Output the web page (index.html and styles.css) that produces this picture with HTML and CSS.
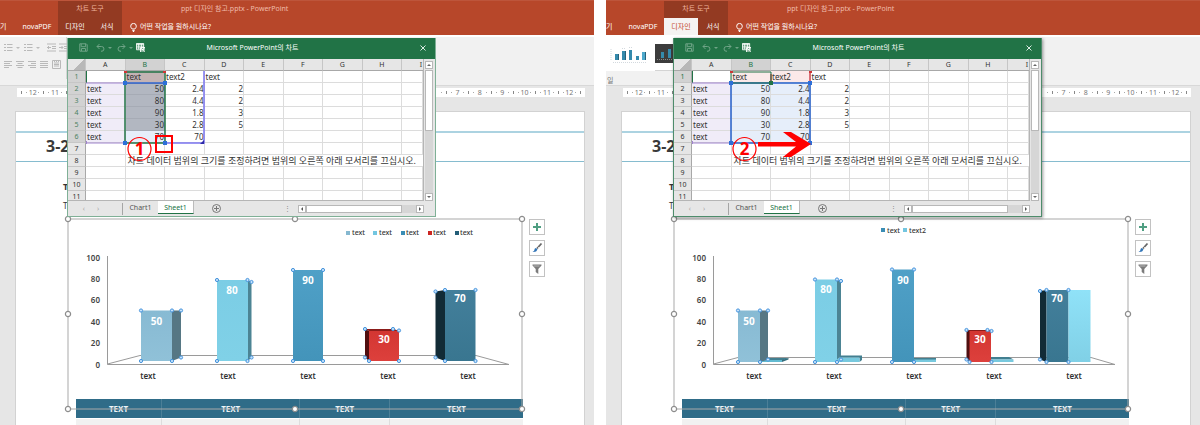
FILE: index.html
```html
<!DOCTYPE html>
<html lang="ko">
<head>
<meta charset="utf-8">
<title>ppt 디자인 참고.pptx - PowerPoint</title>
<link rel="stylesheet" href="styles.css">
</head>
<body>
<svg class="defs" aria-hidden="true">
  <defs>
    <symbol id="i-bullets" viewBox="0 0 9 9"><path d="M0 1.500h2M0 4.500h2M0 7.500h2M3 1.500h5.500M3 4.500h5.500M3 7.500h5.500"/></symbol>
    <symbol id="i-indent" viewBox="0 0 9 9"><path d="M0 1h9M5 3.500h4M5 5.500h4M0 8h9M4 4.500H0M2 3L.5 4.500 2 6"/></symbol>
    <symbol id="i-outdent" viewBox="0 0 9 9"><path d="M0 1h9M5 3.500h4M5 5.500h4M0 8h9M0 4.500h4M2.500 3L4 4.500 2.500 6"/></symbol>
    <symbol id="i-left" viewBox="0 0 9 9"><path d="M0 1.500h8M0 3.500h6M0 5.500h8M0 7.500h5"/></symbol>
    <symbol id="i-center" viewBox="0 0 9 9"><path d="M0 1.500h8M1.500 3.500h5M0 5.500h8M1.500 7.500h5"/></symbol>
    <symbol id="i-right" viewBox="0 0 9 9"><path d="M0 1.500h8M3 3.500h5M0 5.500h8M2 7.500h6"/></symbol>
    <symbol id="i-justify" viewBox="0 0 9 9"><path d="M0 1.500h8M0 3.500h8M0 5.500h8M0 7.500h8"/></symbol>
    <symbol id="i-columns" viewBox="0 0 9 9"><path d="M.5.5h8v8h-8zM2 3h5M2 4.500h5M2 6h5M2.500 0v2M4.500 0v2M6.500 0v2"/></symbol>
    <symbol id="i-save" viewBox="0 0 9 9"><path d="M.8.8h6.400l1 1v6.400H.8zM2.200 1v2.700h4.400V1M2.500 8V5.500h4V8"/></symbol>
    <symbol id="i-undo" viewBox="0 0 9 9"><path d="M3.500 1L1 3.500 3.500 6M1 3.500h4.500Q8 3.500 8 6T5 8.300"/></symbol>
    <symbol id="i-redo" viewBox="0 0 9 9"><path d="M5.500 1L8 3.500 5.500 6M8 3.500H3.500Q1 3.500 1 6t3 2.300"/></symbol>
    <symbol id="i-grid" viewBox="0 0 10 10"><path d="M.5.500h8v7h-8zM.5 1.500h8M.5 3.500h8M.5 5.500h8M3 1v6M6 1v6"/><path class="fill" d="M5 5h5v5H5z"/><path class="dark" d="M6.200 6.200l2.600 2.600M8.800 6.200L6.200 8.800"/></symbol>
    <symbol id="i-bulb" viewBox="0 0 7 9"><path d="M2.200 6Q.7 4.500.7 3.200a2.700 2.700 0 0 1 5.600 0Q6.300 4.500 4.800 6zM2.300 7.400h2.400M2.800 8.500h1.400"/></symbol>
    <symbol id="i-plus" viewBox="0 0 14 14"><path d="M7 3v8M3 7h8" stroke="#4f9f82" stroke-width="2"/></symbol>
    <symbol id="i-brush" viewBox="0 0 14 14"><path d="M11.500 2.500L7 7.500" stroke="#666" stroke-width="1.800"/><path d="M7.800 5.800l1.400 1.400" stroke="#fff" stroke-width=".7"/><path d="M6 7l1.500 1.500Q6.500 11.500 2.500 11q2-1 2-2.500T6 7z" fill="#2f73b7" stroke="none"/></symbol>
    <symbol id="i-funnel" viewBox="0 0 14 14"><path d="M2.500 2.500h9v1L8.300 7v5L5.700 10V7L2.500 3.500z" fill="#7b7b7b" stroke="none"/><path d="M3.500 4h6" stroke="#ddd" stroke-width=".6"/></symbol>
    <linearGradient id="g-pale" x1="0" y1="0" x2="0" y2="1"><stop offset="0" stop-color="#87bad3"/><stop offset="1" stop-color="#90c1d8"/></linearGradient>
    <linearGradient id="g-sky" x1="0" y1="0" x2="0" y2="1"><stop offset="0" stop-color="#7bcde5"/><stop offset="1" stop-color="#80d1e7"/></linearGradient>
    <linearGradient id="g-blue" x1="0" y1="0" x2="0" y2="1"><stop offset="0" stop-color="#4fa0c7"/><stop offset="1" stop-color="#4394ba"/></linearGradient>
    <linearGradient id="g-red" x1="0" y1="0" x2="0" y2="1"><stop offset="0" stop-color="#d33632"/><stop offset="1" stop-color="#dd403c"/></linearGradient>
    <linearGradient id="g-deep" x1="0" y1="0" x2="0" y2="1"><stop offset="0" stop-color="#437f9b"/><stop offset="1" stop-color="#397690"/></linearGradient>
    <linearGradient id="g-ice" x1="0" y1="0" x2="0" y2="1"><stop offset="0" stop-color="#90e2f8"/><stop offset="1" stop-color="#80d0e6"/></linearGradient>
    <g id="dot"><circle r="1.600" fill="#c5e2fa" stroke="#4694dd"/></g>
    <g id="grip"><circle r="2.600" fill="#fff" stroke="#8c8c8c" stroke-width="1.200"/></g>
    <g id="frame">
      <path d="M68 219H522V409H68Z" fill="none" stroke="#a9a9a9"/>
      <use href="#grip" x="68" y="219"/><use href="#grip" x="295" y="219"/><use href="#grip" x="522" y="219"/>
      <use href="#grip" x="68" y="314"/><use href="#grip" x="522" y="314"/>
      <use href="#grip" x="68" y="409"/><use href="#grip" x="295" y="409"/><use href="#grip" x="522" y="409"/>
    </g>
  </defs>
</svg>

<main class="shots">
  <section class="app">
    <header class="ribbon-head">
      <nav class="tabs"><a href="#">기</a><a href="#">novaPDF</a></nav>
      <div class="context">
        <span class="context-name">차트 도구</span>
        <nav class="context-tabs"><a href="#">디자인</a><a href="#">서식</a></nav>
      </div>
      <div class="head-rest">
        <span class="doc-title">ppt 디자인 참고.pptx - PowerPoint</span>
        <button class="tell-me"><svg class="bulb"><use href="#i-bulb"/></svg>어떤 작업을 원하시나요?</button>
      </div>
    </header>
    <div class="ribbon">
      <div class="paragraph">
        <div class="tool-row">
          <button class="tool drop" aria-label="글머리 기호"><svg><use href="#i-bullets"/></svg></button>
          <button class="tool drop" aria-label="번호 매기기"><svg><use href="#i-bullets"/></svg></button>
          <i class="bar"></i>
          <button class="tool" aria-label="내어쓰기"><svg><use href="#i-indent"/></svg></button>
          <button class="tool" aria-label="들여쓰기"><svg><use href="#i-outdent"/></svg></button>
        </div>
        <div class="tool-row">
          <button class="tool" aria-label="왼쪽 맞춤"><svg><use href="#i-left"/></svg></button>
          <button class="tool" aria-label="가운데 맞춤"><svg><use href="#i-center"/></svg></button>
          <button class="tool" aria-label="오른쪽 맞춤"><svg><use href="#i-right"/></svg></button>
          <button class="tool" aria-label="양쪽 맞춤"><svg><use href="#i-justify"/></svg></button>
          <button class="tool" aria-label="균등 분할"><svg><use href="#i-columns"/></svg></button>
        </div>
      </div>
    </div>
    <div class="workspace">
      <ul class="ruler"><li>12<li>11<li><li><li><li><li><li><li><li><li><li><li><li><li><li><li><li><li><li>7<li>8<li>9<li>10<li>11<li>12</ul>
      <article class="slide">
        <h1 class="slide-title">3-2</h1>
        <p class="lead">T</p>
        <p class="sub">T</p>
        <div class="chart-row">
          <figure class="chart">
            <svg viewBox="68 219 454 190" role="img" aria-label="차트">
              <g class="axis"><path d="M107.500 256V364.500H509L476 355.500H140L107.500 364"/></g>
              <g class="values"><text x="100" y="261">100</text><text x="100" y="282">80</text><text x="100" y="303">60</text><text x="100" y="325">40</text><text x="100" y="346">20</text><text x="100" y="368">0</text></g>
              <g class="cats"><text x="148" y="379">text</text><text x="228" y="379">text</text><text x="308" y="379">text</text><text x="388" y="379">text</text><text x="468" y="379">text</text></g>
              <g class="legend">
                <path fill="#86b8d0" d="M346 231h4v4h-4z"/><text x="352" y="235">text</text>
                <path fill="#73c6e0" d="M373 231h4v4h-4z"/><text x="379" y="235">text</text>
                <path fill="#3a8db5" d="M401 231h4v4h-4z"/><text x="406" y="235">text</text>
                <path fill="#cc2522" d="M428 231h4v4h-4z"/><text x="433" y="235">text</text>
                <path fill="#235d78" d="M455 231h4v4h-4z"/><text x="460" y="235">text</text>
              </g>
              <path fill="url(#g-pale)" d="M141 310.500h31V361h-31z"/><path fill="#567784" d="M172 310.500h9v47l-9 3.500z"/>
              <path fill="url(#g-sky)" d="M217 280h31v81h-31z"/><path fill="#4c8494" d="M248 280l3.500 2v75.500L248 361z"/>
              <path fill="url(#g-blue)" d="M293 270h30v91h-30z"/>
              <path fill="#8b1c1a" d="M365 329h29l5 2h-30z"/><path fill="#500f10" d="M365 329l4 2v30l-4-3.500z"/><path fill="url(#g-red)" d="M369 331h30v30h-30z"/>
              <path fill="#122b36" d="M435.500 291.500l9.500-1.500v71l-9.500-3.500z"/><path fill="url(#g-deep)" d="M445 290h30.500v71H445z"/>
              <g class="marks"><text x="156.500" y="325">50</text><text x="232" y="294">80</text><text x="308" y="284">90</text><text x="384" y="343">30</text><text x="460" y="302">70</text></g>
              <g>
                <use href="#dot" x="141" y="310.500"/><use href="#dot" x="172" y="310.500"/><use href="#dot" x="181" y="310.500"/><use href="#dot" x="141" y="361"/><use href="#dot" x="172" y="361"/><use href="#dot" x="181" y="357.500"/>
                <use href="#dot" x="217" y="280"/><use href="#dot" x="247.500" y="280"/><use href="#dot" x="251.500" y="282"/><use href="#dot" x="217" y="361"/><use href="#dot" x="247.500" y="361"/><use href="#dot" x="251.500" y="357.500"/>
                <use href="#dot" x="293" y="270"/><use href="#dot" x="323" y="270"/><use href="#dot" x="293" y="361"/><use href="#dot" x="323" y="361"/>
                <use href="#dot" x="365" y="329"/><use href="#dot" x="393" y="329"/><use href="#dot" x="399" y="330.500"/><use href="#dot" x="365" y="357.500"/><use href="#dot" x="369" y="361"/><use href="#dot" x="399" y="361"/>
                <use href="#dot" x="435.500" y="291.500"/><use href="#dot" x="445" y="290"/><use href="#dot" x="475.500" y="290"/><use href="#dot" x="435.500" y="357.500"/><use href="#dot" x="445" y="361"/><use href="#dot" x="475.500" y="361"/>
              </g>
              <use href="#frame"/>
            </svg>
          </figure>
          <div class="chart-tools">
            <button aria-label="차트 요소"><svg><use href="#i-plus"/></svg></button>
            <button aria-label="차트 스타일"><svg><use href="#i-brush"/></svg></button>
            <button aria-label="차트 필터"><svg><use href="#i-funnel"/></svg></button>
          </div>
        </div>
        <table class="slide-table">
          <colgroup><col class="c1"><col class="c2"><col class="c3"><col class="c4"></colgroup>
          <thead><tr><th>TEXT</th><th>TEXT</th><th>TEXT</th><th>TEXT</th></tr></thead>
          <tbody><tr><td></td><td></td><td></td><td></td></tr></tbody>
        </table>
      </article>
    </div>

    <div class="window">
      <div class="window-bar">
        <div class="quick">
          <button class="faint" aria-label="저장"><svg><use href="#i-save"/></svg></button>
          <button class="faint drop" aria-label="실행 취소"><svg><use href="#i-undo"/></svg></button>
          <button class="faint drop" aria-label="다시 실행"><svg><use href="#i-redo"/></svg></button>
          <button aria-label="데이터 편집"><svg><use href="#i-grid"/></svg></button>
        </div>
        <span>Microsoft PowerPoint의 차트</span>
        <button class="close" aria-label="닫기"><svg viewBox="0 0 6 6"><path d="M.5.5l5 5M5.500.5l-5 5"/></svg></button>
      </div>
      <div class="window-main">
        <div class="sheet">
          <table class="cells rows-on">
            <colgroup><col class="num"><col span="8"><col class="last"></colgroup>
            <thead><tr><th class="corner"></th><th>A</th><th class="on">B</th><th>C</th><th>D</th><th>E</th><th>F</th><th>G</th><th>H</th><th class="end">I</th></tr></thead>
            <tbody>
              <tr><th>1<td><td class="rose-on">text<td>text2<td>text<td><td><td><td><td>
              <tr><th>2<td class="lilac">text<td class="n on">50<td class="n">2.4<td class="n">2<td><td><td><td><td>
              <tr><th>3<td class="lilac">text<td class="n on">80<td class="n">4.4<td class="n">2<td><td><td><td><td>
              <tr><th>4<td class="lilac">text<td class="n on">90<td class="n">1.8<td class="n">3<td><td><td><td><td>
              <tr><th>5<td class="lilac">text<td class="n on">30<td class="n">2.8<td class="n">5<td><td><td><td><td>
              <tr><th>6<td class="lilac">text<td class="n azure">70<td class="n">70<td><td><td><td><td><td>
              <tr class="off"><th>7<td><td><td><td><td><td><td><td><td>
              <tr class="off"><th>8<td><td class="note" colspan="8">차트 데이터 범위의 크기를 조정하려면 범위의 오른쪽 아래 모서리를 끄십시오.
              <tr class="off"><th>9<td><td><td><td><td><td><td><td><td>
              <tr class="off"><th>10<td><td><td><td><td><td><td><td><td>
              <tr class="off"><th>11<td><td><td><td><td><td><td><td><td>
            </tbody>
          </table>
        </div>
        <div class="vscroll"><button class="up" aria-label="위로"></button><i class="thumb"></i><i class="track"></i><button class="down" aria-label="아래로"></button></div>
      </div>
      <div class="sheet-tabs">
        <div class="arrows"><button aria-label="이전">‹</button><button aria-label="다음">›</button></div>
        <button class="sheet-tab">Chart1</button><button class="sheet-tab active">Sheet1</button>
        <button class="add" aria-label="새 시트"><svg viewBox="0 0 9 9"><circle cx="4.500" cy="4.500" r="4"/><path d="M4.500 2v5M2 4.500h5"/></svg></button>
        <span class="dots">⋮</span>
        <div class="hscroll"><button class="prev" aria-label="왼쪽"></button><i class="thumb"></i><i class="track"></i><button class="next" aria-label="오른쪽"></button></div>
      </div>
      <svg class="marks-layer" viewBox="0 0 369 179">
        <g fill="none">
          <path stroke="#217346" d="M19.500 33V45"/>
          <path stroke="#a083cf" d="M19 45H58M19 105H58M19.500 103v3"/>
          <path stroke="#7b74ef" stroke-width="1.500" d="M137 33V105H98"/>
          <path stroke="#217346" stroke-width="1.500" d="M58 34H98V105H58Z"/>
          <path stroke="#2458c5" stroke-width="1.500" d="M58 45H98"/>
        </g>
        <path fill="#2d6fd8" d="M56 43h4v4h-4zM96 43h4v4h-4zM56 103h4v4h-4zM96 103h4v4h-4z"/>
        <path fill="#cf3535" d="M57 33h3v2h-3zM96 33h3v2h-3z"/>
        <path fill="#2d2aa8" d="M137 102v4h-4z"/>
        <g class="callout"><circle cx="72.500" cy="111" r="11.500"/><text x="72.500" y="117">1</text><path stroke-width="2" d="M89 98h16v16H89z"/></g>
      </svg>
    </div>
  </section>

  <section class="app">
    <header class="ribbon-head">
      <nav class="tabs"><a href="#">기</a><a href="#">novaPDF</a></nav>
      <div class="context">
        <span class="context-name">차트 도구</span>
        <nav class="context-tabs"><a class="current" href="#">디자인</a><a href="#">서식</a></nav>
      </div>
      <div class="head-rest">
        <span class="doc-title">ppt 디자인 참고.pptx - PowerPoint</span>
        <button class="tell-me"><svg class="bulb"><use href="#i-bulb"/></svg>어떤 작업을 원하시나요?</button>
      </div>
    </header>
    <div class="ribbon">
      <div class="styles">
        <div class="gallery">
          <svg class="thumb-light" viewBox="0 0 49 35"><path fill="#fff" d="M0 0h49v35H0z"/><g fill="#348aac"><path d="M9 18h3v6H9zM16 15h3v9h-3zM23 14h3v10h-3zM30 20h3v4h-3z"/></g><path fill="#4da9cc" d="M36 16h3v8h-3z"/><path fill="#27617a" d="M12 18h1v6h-1zM19 15h1v9h-1zM39 16h1v8h-1z"/><g stroke="#d3d9de" stroke-dasharray="1 1"><path d="M5 13v11M7 26.500h34M16 12.500h3M23 11.500h3"/></g></svg>
          <svg class="thumb-dark" viewBox="0 0 19 19"><path fill="#3c3c3c" d="M0 0h19v19H0z"/><path fill="#348aac" d="M6 8h3v6H6zM13 5h3v9h-3z"/><path stroke="#888" stroke-dasharray="1 1" d="M2 15.500h16"/></svg>
        </div>
        <span class="group-name">일</span>
      </div>
    </div>
    <div class="workspace">
      <ul class="ruler"><li>12<li>11<li><li><li><li><li><li><li><li><li><li><li><li><li><li><li><li><li><li>7<li>8<li>9<li>10<li>11<li>12</ul>
      <article class="slide">
        <h1 class="slide-title">3-2</h1>
        <p class="lead">T</p>
        <p class="sub">T</p>
        <div class="chart-row">
          <figure class="chart">
            <svg viewBox="68 219 454 190" role="img" aria-label="차트">
              <g class="axis"><path d="M107.500 256V364.500H509L485 357.500H132L107.500 364"/></g>
              <g class="values"><text x="100" y="261">100</text><text x="100" y="282">80</text><text x="100" y="303">60</text><text x="100" y="325">40</text><text x="100" y="346">20</text><text x="100" y="368">0</text></g>
              <g class="cats"><text x="148" y="379">text</text><text x="228" y="379">text</text><text x="308" y="379">text</text><text x="388" y="379">text</text><text x="468" y="379">text</text></g>
              <g class="legend">
                <path fill="#3a8db5" d="M275 228h4v4h-4z"/><text x="281" y="233">text</text>
                <path fill="#73c6e0" d="M297 228h4v4h-4z"/><text x="303" y="233">text2</text>
              </g>
              <path fill="#427f90" d="M161 358h21.500l-6 2.500H154z"/><path fill="#63bbd1" d="M154 360h22v2h-22z"/><path fill="#376e7d" d="M176 360l6.500-2v1.500L176 362z"/>
              <path fill="url(#g-pale)" d="M132 310.500h22V362h-22z"/><path fill="#567784" d="M154 310.500h8v49l-8 2.500z"/>
              <path fill="#427f90" d="M235 355.500h21L253.500 357.500H231zM253.500 357.500l2.500-2v4.500l-2.500 2z"/><path fill="#78c9de" d="M231 357.500h22.500v4.500H231z"/>
              <path fill="url(#g-sky)" d="M209 279.500h22V362h-22z"/><path fill="#4c8494" d="M231 279.500l4 2V355.500l-4 4z"/>
              <path fill="#427f90" d="M308 358h22v2h-22z"/><path fill="#78c9de" d="M308 359.500h22v2.500h-22z"/>
              <path fill="url(#g-blue)" d="M286 269.500h22V362h-22z"/>
              <path fill="#427f90" d="M385 357h18l4.500 2.500H385z"/><path fill="#78c9de" d="M385 359.500h22.500v2.500H385z"/>
              <path fill="#500f10" d="M360.500 330l3.500.5V362l-3.500-2.500z"/><path fill="url(#g-red)" d="M363.500 330.500H385V362h-21.500z"/><path stroke="#8b1c1a" d="M361 330.500h24"/>
              <path fill="#122b36" d="M434 291l6.500-1V362l-6.500-2.500z"/><path fill="url(#g-deep)" d="M440.500 290h22v72h-22z"/><path fill="url(#g-ice)" d="M462.500 290h22v72h-22z"/>
              <g class="marks"><text x="143" y="325">50</text><text x="220" y="293">80</text><text x="297" y="284">90</text><text x="374" y="343">30</text><text x="451" y="302">70</text></g>
              <g>
                <use href="#dot" x="132" y="310.500"/><use href="#dot" x="154" y="310.500"/><use href="#dot" x="162" y="310.500"/><use href="#dot" x="132" y="362"/><use href="#dot" x="154" y="362"/><use href="#dot" x="162" y="359.500"/>
                <use href="#dot" x="209" y="279.500"/><use href="#dot" x="231" y="279.500"/><use href="#dot" x="235" y="281"/><use href="#dot" x="209" y="362"/><use href="#dot" x="231" y="362"/><use href="#dot" x="235" y="359.500"/>
                <use href="#dot" x="286" y="269.500"/><use href="#dot" x="308" y="269.500"/><use href="#dot" x="286" y="362"/><use href="#dot" x="308" y="362"/>
                <use href="#dot" x="360.500" y="330"/><use href="#dot" x="381.500" y="330"/><use href="#dot" x="385.500" y="331"/><use href="#dot" x="360.500" y="359.500"/><use href="#dot" x="363.500" y="362"/><use href="#dot" x="385.500" y="362"/>
                <use href="#dot" x="434" y="291"/><use href="#dot" x="440.500" y="290"/><use href="#dot" x="462.500" y="290"/><use href="#dot" x="434" y="359.500"/><use href="#dot" x="440.500" y="362"/><use href="#dot" x="462.500" y="362"/>
              </g>
              <use href="#frame"/>
            </svg>
          </figure>
          <div class="chart-tools">
            <button aria-label="차트 요소"><svg><use href="#i-plus"/></svg></button>
            <button aria-label="차트 스타일"><svg><use href="#i-brush"/></svg></button>
            <button aria-label="차트 필터"><svg><use href="#i-funnel"/></svg></button>
          </div>
        </div>
        <table class="slide-table">
          <colgroup><col class="c1"><col class="c2"><col class="c3"><col class="c4"></colgroup>
          <thead><tr><th>TEXT</th><th>TEXT</th><th>TEXT</th><th>TEXT</th></tr></thead>
          <tbody><tr><td></td><td></td><td></td><td></td></tr></tbody>
        </table>
      </article>
    </div>

    <div class="window raised">
      <div class="window-bar">
        <div class="quick">
          <button class="faint" aria-label="저장"><svg><use href="#i-save"/></svg></button>
          <button class="faint drop" aria-label="실행 취소"><svg><use href="#i-undo"/></svg></button>
          <button class="faint drop" aria-label="다시 실행"><svg><use href="#i-redo"/></svg></button>
          <button aria-label="데이터 편집"><svg><use href="#i-grid"/></svg></button>
        </div>
        <span>Microsoft PowerPoint의 차트</span>
        <button class="close" aria-label="닫기"><svg viewBox="0 0 6 6"><path d="M.5.5l5 5M5.500.5l-5 5"/></svg></button>
      </div>
      <div class="window-main">
        <div class="sheet">
          <table class="cells">
            <colgroup><col class="num"><col span="8"><col class="last"></colgroup>
            <thead><tr><th class="corner"></th><th>A</th><th class="on">B</th><th>C</th><th>D</th><th>E</th><th>F</th><th>G</th><th>H</th><th class="end">I</th></tr></thead>
            <tbody>
              <tr><th class="on">1<td><td class="rose">text<td class="rose">text2<td>text<td><td><td><td><td>
              <tr><th>2<td class="lilac">text<td class="n azure">50<td class="n azure">2.4<td class="n">2<td><td><td><td><td>
              <tr><th>3<td class="lilac">text<td class="n azure">80<td class="n azure">4.4<td class="n">2<td><td><td><td><td>
              <tr><th>4<td class="lilac">text<td class="n azure">90<td class="n azure">1.8<td class="n">3<td><td><td><td><td>
              <tr><th>5<td class="lilac">text<td class="n azure">30<td class="n azure">2.8<td class="n">5<td><td><td><td><td>
              <tr><th>6<td class="lilac">text<td class="n azure">70<td class="n azure">70<td><td><td><td><td><td>
              <tr><th>7<td><td><td><td><td><td><td><td><td>
              <tr><th>8<td><td class="note" colspan="8">차트 데이터 범위의 크기를 조정하려면 범위의 오른쪽 아래 모서리를 끄십시오.
              <tr><th>9<td><td><td><td><td><td><td><td><td>
              <tr><th>10<td><td><td><td><td><td><td><td><td>
              <tr><th>11<td><td><td><td><td><td><td><td><td>
            </tbody>
          </table>
        </div>
        <div class="vscroll"><button class="up" aria-label="위로"></button><i class="thumb"></i><i class="track"></i><button class="down" aria-label="아래로"></button></div>
      </div>
      <div class="sheet-tabs">
        <div class="arrows"><button aria-label="이전">‹</button><button aria-label="다음">›</button></div>
        <button class="sheet-tab">Chart1</button><button class="sheet-tab active">Sheet1</button>
        <button class="add" aria-label="새 시트"><svg viewBox="0 0 9 9"><circle cx="4.500" cy="4.500" r="4"/><path d="M4.500 2v5M2 4.500h5"/></svg></button>
        <span class="dots">⋮</span>
        <div class="hscroll"><button class="prev" aria-label="왼쪽"></button><i class="thumb"></i><i class="track"></i><button class="next" aria-label="오른쪽"></button></div>
      </div>
      <svg class="marks-layer" viewBox="0 0 369 179">
        <g fill="none">
          <path stroke="#217346" d="M19.500 33V45"/>
          <path stroke="#a083cf" d="M19 45H58M19 105H58M19.500 103v3"/>
          <path stroke="#cf4550" stroke-width="1.500" d="M98 36V45M137 34V45"/>
          <path stroke="#2460cc" stroke-width="1.500" d="M58 45H137V105H58Z"/>
          <path stroke="#217346" d="M58 34H98V45H58Z"/>
        </g>
        <path fill="#2d6fd8" d="M56 43h4v4h-4zM135 43h4v4h-4zM56 103h4v4h-4zM135 103h4v4h-4z"/>
        <path fill="#cf3535" d="M57 33h3v2h-3zM136 33h3v2h-3z"/>
        <path fill="#217346" d="M96 43h4v4h-4z"/>
        <g class="callout"><circle cx="71.500" cy="111" r="11.500"/><text x="71.500" y="117">2</text></g>
        <path fill="#f00" d="M85 104h38L110 94h8l20 12-20 13h-8l13-10.500H85z"/>
      </svg>
    </div>
  </section>
</main>
</body>
</html>
```
FILE: styles.css
```css
* { box-sizing: border-box; }

body {
  margin: 0;
  background: #fff;
  color: #333;
  font: 7px/10px "Noto Sans", "Noto Sans CJK KR", sans-serif;
}

h1, p, ul, figure { margin: 0; padding: 0; }
a { color: inherit; text-decoration: none; }

button {
  margin: 0;
  padding: 0;
  border: 0;
  background: none;
  color: inherit;
  font: inherit;
}

.defs { position: absolute; width: 0; height: 0; }

.shots { display: flex; gap: 12px; min-height: 100vh; }

.app {
  position: relative;
  flex: 1;
  min-width: 0;
  display: flex;
  flex-direction: column;
  overflow: hidden;
}

/* Title and tab strip */
.ribbon-head {
  display: flex;
  height: 35px;
  border-top: 1px solid #bd553b;
  background: #b7472a;
  color: #f8e0d8;
}

.tabs { display: flex; align-items: flex-end; gap: 16px; width: 58px; padding-bottom: 3px; }
.tabs a { color: #fff; }

.context { width: 64px; display: flex; flex-direction: column; background: #933a22; }
.context-name { flex: 1; padding-top: 3px; text-align: center; color: #eeb49f; }
.context-tabs { display: flex; color: #fff; }
.context-tabs a { flex: 1 1 34px; padding: 3px 0; line-height: 11px; text-align: center; }
.context-tabs a + a { flex-basis: 30px; }
.context-tabs .current { background: #f5f3f2; color: #c4492b; }

.head-rest { flex: 1; display: flex; flex-direction: column; justify-content: space-between; padding: 3px 0 3px 8px; }
.doc-title { padding-left: 51px; color: #f0bcab; }
.tell-me { display: flex; align-items: center; gap: 3px; height: 10px; color: #fff; }
.bulb { width: 7px; height: 9px; fill: none; stroke: #fff; stroke-width: 1; }

/* Ribbon */
.ribbon { height: 51px; border-top: 2px solid #fff; border-bottom: 1px solid #d8d8d8; background: #f1f1f1; }

.paragraph {
  display: flex;
  flex-direction: column;
  gap: 8px;
  width: 67px;
  height: 42px;
  padding: 6px 0 0 4px;
  border-right: 1px solid #d5d5d5;
}
.tool-row { display: flex; align-items: center; gap: 3px; height: 9px; }
.tool { display: flex; align-items: center; height: 9px; }
.tool svg { width: 9px; height: 9px; fill: none; stroke: #b9b9b9; stroke-width: 1; }
.drop::after { content: ""; margin: 0 1px 0 3px; border: 2px solid transparent; border-top-color: #bbb; border-bottom: 0; }
.bar { width: 1px; height: 12px; background: #d2d2d2; }

.styles { width: 68px; height: 48px; }
.gallery { display: flex; align-items: center; height: 34px; border-bottom: 1px solid #d4d4d4; background: #fff; }
.thumb-light { width: 49px; height: 35px; }
.thumb-dark { width: 19px; height: 19px; }
.group-name { display: block; padding: 5px 0 0 1px; color: #777; }

/* Work area */
.workspace { flex: 1; display: flex; flex-direction: column; padding: 2px 9px 0 15px; background: #e6e6e6; }

.ruler {
  display: flex;
  height: 9px;
  margin-left: 2px;
  padding: 0 4px;
  background: #fff;
  color: #777;
  line-height: 9px;
  list-style: none;
}
.ruler li { flex: 1 1 0; display: flex; justify-content: space-between; align-items: center; min-width: 0; }
.ruler li::before {
  content: "";
  width: 7px;
  height: 3px;
  background: linear-gradient(#888, #888) 0 0 / 1px 3px no-repeat, linear-gradient(#aaa, #aaa) 5px 1px / 1px 1px no-repeat;
}
.ruler li::after { content: ""; width: 6px; height: 1px; background: linear-gradient(#aaa, #aaa) 1px 0 / 1px 1px no-repeat; }
.ruler::after { content: ""; align-self: center; width: 1px; height: 3px; background: #888; }

.slide { flex: 1; margin-top: 14px; border: 1px solid #d2d2d2; border-bottom: 0; background: #fff; }
.slide-title {
  height: 31px;
  margin-top: 19px;
  padding: 1px 0 0 30px;
  border-top: 2px solid #acd3e1;
  border-bottom: 1px solid #86bccf;
  color: #3a3a3a;
  font-size: 16px;
  line-height: 24px;
}
.lead { margin-top: 16px; padding-left: 47px; font-size: 9px; font-weight: 700; line-height: 18px; }
.sub { margin-bottom: 3px; padding-left: 47px; font-size: 8px; line-height: 20px; }

.chart-row { display: flex; gap: 7px; padding: 0 39px 0 52px; }
.chart { position: relative; z-index: 1; flex: 1; }
.chart svg { display: block; width: 100%; overflow: visible; }
.axis { fill: none; stroke: #9a9a9a; stroke-width: 1; }
.values { fill: #444; font-size: 8px; font-weight: 600; text-anchor: end; }
.cats { fill: #333; font-size: 8px; font-weight: 600; text-anchor: middle; }
.legend { fill: #333; font-size: 7px; font-weight: 500; }
.marks { fill: #fff; font-size: 10px; font-weight: 700; text-anchor: middle; }

.chart-tools { display: flex; flex-direction: column; gap: 5px; }
.chart-tools button { width: 16px; height: 16px; border: 1px solid #c2c2c2; background: #fff; }
.chart-tools svg { display: block; width: 14px; height: 14px; fill: none; }

.slide-table { width: calc(100% - 121px); margin: -10px 61px 0 60px; border-spacing: 0; table-layout: fixed; }
.slide-table .c1 { width: 19%; }
.slide-table .c2 { width: 31%; }
.slide-table .c3 { width: 20%; }
.slide-table .c4 { width: 30%; }
.slide-table th { height: 19px; padding: 0; background: #2f6c88; color: #eef4f7; font-size: 8px; line-height: 10px; }
.slide-table th + th { border-left: 1px solid #4b7f97; }
.slide-table td { height: 7px; padding: 0; border-top: 1px solid #fff; background: #f1f1f1; }
.slide-table td + td { border-left: 1px solid #ddd; }

/* Data window over the slide */
.window {
  position: absolute;
  z-index: 2;
  top: 38px;
  left: 67px;
  width: 369px;
  border: 1px solid #7fb096;
  border-top: 0;
  background: #e6e6e6;
}
.raised { border-color: #4d8c6b; box-shadow: 1px 1px 3px #0006; }

.window-bar {
  display: grid;
  grid-template-columns: 1fr auto 1fr;
  align-items: center;
  height: 21px;
  padding: 0 9px 2px 11px;
  background: #217346;
  color: #fff;
}
.quick { display: flex; gap: 6px; }
.quick button { display: flex; align-items: center; }
.quick svg { width: 9px; height: 9px; fill: none; stroke: #fff; stroke-width: 1; }
.quick .faint { opacity: .35; }
.quick .fill { fill: #fff; stroke: none; }
.quick .dark { stroke: #217346; }
.quick .faint + .faint { margin-left: 2px; }
.quick .drop { margin-right: -4px; }
.quick .drop::after { border-top-color: #fff; }
.close { justify-self: end; display: flex; }
.close svg { width: 6px; height: 6px; stroke: #dcebe3; stroke-width: 1; }

.window-main { display: flex; height: 142px; }
.sheet { flex: 1; overflow: hidden; border-right: 1px solid #b5b5b5; border-bottom: 1px solid #b5b5b5; }
.cells { width: 100%; border-spacing: 0; table-layout: fixed; font-size: 8px; line-height: 11px; }
.num { width: 18px; }
.last { width: 21px; }
.cells th { height: 12px; padding: 0; background: #e6e6e6; color: #333; font-size: 7px; font-weight: 400; border-right: 1px solid #c6c6c6; border-bottom: 1px solid #c6c6c6; }
.cells thead th { border-bottom-color: #a8a8a8; }
.cells tbody th { border-right-color: #a8a8a8; }
.cells .end { padding-right: 1px; border-right: 0; text-align: right; }
.cells .on { background: #d2d2d2; color: #217346; }
.rows-on tbody tr:not(.off) th { background: #d2d2d2; color: #4d8264; }
.cells .corner { background: linear-gradient(135deg, #e6e6e6 60%, #b8b8b8 60%); }
.cells td { height: 12px; padding: 0 1px; background: #fff; color: #333; border-right: 1px solid #dcdcdc; border-bottom: 1px solid #dcdcdc; white-space: nowrap; }
.cells td.n { padding-right: 0; text-align: right; }
.cells td.on { background: #b2b7c1; color: #333; border-color: #a6abb5; }
.cells td.lilac { background: #f0ecf8; }
.cells td.azure { background: #e6eefa; }
.cells td.rose { background: #fbe9e9; }
.cells td.rose-on { background: #c4b3b4; }
.cells td.note { padding-left: 2px; border-right: 0; font-size: 9px; }

.vscroll { display: flex; flex-direction: column; width: 11px; padding: 2px 2px 0 1px; }
.vscroll button, .hscroll button { display: flex; align-items: center; justify-content: center; width: 8px; height: 8px; border: 1px solid #b8b8b8; background: #fff; }
.vscroll button::before, .hscroll button::before { content: ""; border: 2px solid transparent; }
.vscroll .up::before { border-bottom-color: #666; border-top: 0; }
.vscroll .down::before { border-top-color: #666; border-bottom: 0; }
.vscroll .thumb { height: 61px; margin-top: 1px; border: 1px solid #b8b8b8; background: #fff; }
.vscroll .track { flex: 1; background: #d6d6d6; }

.sheet-tabs { display: flex; align-items: center; height: 15px; padding-right: 11px; color: #555; }
.arrows { display: flex; justify-content: center; gap: 12px; width: 55px; height: 12px; padding-right: 8px; border-right: 1px solid #a5a5a5; color: #aaa; }
.sheet-tab { width: 35px; height: 13px; align-self: flex-start; font-size: 7px; line-height: 13px; }
.sheet-tab.active { width: 36px; border-right: 1px solid #bbb; border-bottom: 1px solid #217346; background: #fff; color: #217346; }
.add { display: flex; margin-left: 18px; }
.add svg { width: 9px; height: 9px; fill: none; stroke: #777; stroke-width: 1; }
.dots { margin-left: auto; color: #888; }
.hscroll { display: flex; width: 126px; margin-left: 7px; }
.hscroll .prev::before { border-right-color: #555; border-left: 0; }
.hscroll .next::before { border-left-color: #555; border-right: 0; }
.hscroll .thumb { width: 96px; height: 8px; border: 1px solid #b8b8b8; background: #fff; }
.hscroll .track { flex: 1; height: 8px; background: #d6d6d6; }

/* Range outlines and callouts drawn over the cells */
.marks-layer { position: absolute; top: 0; left: -1px; width: 369px; height: 179px; overflow: visible; pointer-events: none; }
.callout { fill: none; stroke: #f00; stroke-width: 1.2; }
.callout text { fill: #f00; stroke: none; font-size: 17px; font-weight: 700; text-anchor: middle; }
```
